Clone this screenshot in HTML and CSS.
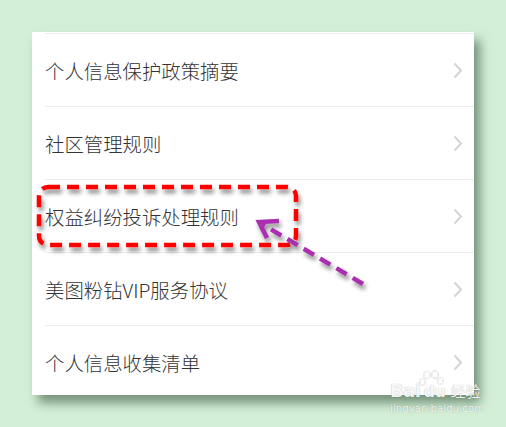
FILE: index.html
```html
<!DOCTYPE html>
<html lang="zh">
<head>
<meta charset="utf-8">
<link rel="stylesheet" href="styles.css">
</head>
<body>
<div class="stage">
  <div class="card">
    <div class="row"><span class="label">个人信息保护政策摘要</span><span class="chev"><svg width="10" height="17" viewBox="0 0 10 17"><path d="M1.5 1.5 L8 8.5 L1.5 15.5" fill="none" stroke="#d4d4d6" stroke-width="2"/></svg></span></div>
    <div class="row"><span class="label">社区管理规则</span><span class="chev"><svg width="10" height="17" viewBox="0 0 10 17"><path d="M1.5 1.5 L8 8.5 L1.5 15.5" fill="none" stroke="#d4d4d6" stroke-width="2"/></svg></span></div>
    <div class="row"><span class="label">权益纠纷投诉处理规则</span><span class="chev"><svg width="10" height="17" viewBox="0 0 10 17"><path d="M1.5 1.5 L8 8.5 L1.5 15.5" fill="none" stroke="#d4d4d6" stroke-width="2"/></svg></span></div>
    <div class="row"><span class="label">美图粉钻VIP服务协议</span><span class="chev"><svg width="10" height="17" viewBox="0 0 10 17"><path d="M1.5 1.5 L8 8.5 L1.5 15.5" fill="none" stroke="#d4d4d6" stroke-width="2"/></svg></span></div>
    <div class="row"><span class="label">个人信息收集清单</span><span class="chev"><svg width="10" height="17" viewBox="0 0 10 17"><path d="M1.5 1.5 L8 8.5 L1.5 15.5" fill="none" stroke="#d4d4d6" stroke-width="2"/></svg></span></div>
  </div>
  <svg class="annot" width="506" height="427" viewBox="0 0 506 427">
    <defs>
      <filter id="sh" x="-20%" y="-20%" width="140%" height="140%">
        <feDropShadow dx="2" dy="4" stdDeviation="2" flood-color="#000" flood-opacity="0.45"/>
      </filter>
    </defs>
    <rect x="39" y="187" width="257" height="58" rx="9" ry="9" fill="none" stroke="#ff0000" stroke-width="4.5" stroke-dasharray="12 7" filter="url(#sh)"/>
    <g filter="url(#sh)" stroke="#aa2fb0" stroke-width="4.5" fill="none" stroke-linecap="butt">
      <path d="M363 284 L262 224" stroke-dasharray="12 7"/>
      <path d="M279 221 L259 222 L267 238" stroke-linejoin="miter"/>
    </g>
  </svg>
  <div class="wm">
    <div class="wm-top"><span class="wm-bai">Bai</span><svg class="paw" width="26" height="24" viewBox="0 0 26 24"><g fill="none" stroke="rgba(255,255,255,0.9)" stroke-width="1.4"><ellipse cx="8" cy="5" rx="3" ry="3.6"/><ellipse cx="16" cy="4.5" rx="3" ry="3.6"/><ellipse cx="3.5" cy="12" rx="2.6" ry="3.2"/><ellipse cx="21.5" cy="11" rx="2.6" ry="3.2"/></g></svg><span class="wm-du">du</span><span class="wm-jy">经验</span></div>
    <div class="wm-url">jingyan.baidu.com</div>
  </div>
</div>
</body>
</html>
```
FILE: styles.css
```css
html, body {
  margin: 0;
  padding: 0;
  background: #d3f0d7;
}
.stage {
  position: relative;
  width: 506px;
  height: 427px;
  padding: 32px 0 0 32px;
  box-sizing: border-box;
}
.card {
  width: 442px;
  height: 363px;
  background: #ffffff;
  overflow: hidden;
  padding-top: 1px;
  box-sizing: border-box;
  box-shadow: 6px 8px 10px rgba(40, 70, 45, 0.55);
}
.row {
  display: flex;
  align-items: center;
  justify-content: space-between;
  height: 72px;
  margin-left: 13px;
  border-top: 1px solid #ececee;
  padding-right: 11px;
}
.label {
  font-family: "Noto Sans CJK SC", "Noto Sans", sans-serif;
  font-size: 19.4px;
  font-weight: 300;
  color: #333335;
}
.chev {
  display: flex;
  align-items: center;
}
.annot {
  position: absolute;
  left: 0;
  top: 0;
  pointer-events: none;
}
.wm {
  position: absolute;
  left: 390px;
  top: 370px;
  width: 92px;
  color: rgba(255, 255, 255, 0.92);
  font-family: "DejaVu Sans", sans-serif;
  text-shadow: 0 0 1px rgba(0, 0, 0, 0.35);
}
.wm-top {
  position: relative;
  display: flex;
  align-items: flex-end;
  height: 30px;
}
.wm-bai {
  font-weight: bold;
  font-size: 18px;
  line-height: 18px;
  letter-spacing: -0.5px;
}
.paw {
  position: absolute;
  left: 29px;
  top: 0;
  filter: drop-shadow(0 0 0.6px rgba(0, 0, 0, 0.35));
}
.wm-du {
  font-weight: bold;
  font-size: 16px;
  line-height: 16px;
  margin-left: 3px;
  letter-spacing: -0.5px;
}
.wm-jy {
  font-family: "Noto Sans CJK SC", sans-serif;
  font-size: 15px;
  line-height: 18px;
  margin-left: 5px;
}
.wm-url {
  font-size: 10px;
  margin-top: 3px;
  letter-spacing: 0.1px;
}
```
